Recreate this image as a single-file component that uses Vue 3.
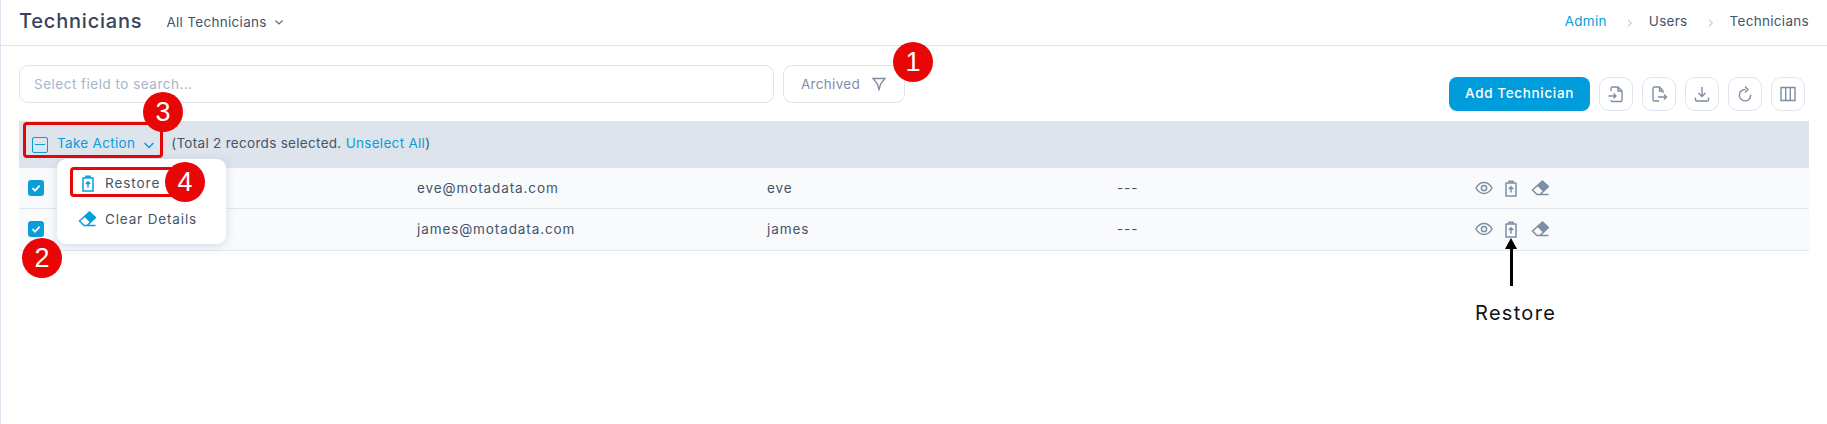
<script setup>
const rows = [
  { email: 'eve@motadata.com', user: 'eve' },
  { email: 'james@motadata.com', user: 'james' },
]
const crumbs = ['Users', 'Technicians']
</script>

<template>
  <div class="page">
    <header class="topbar">
      <h1 class="title">Technicians</h1>
      <div class="view">
        All Technicians
        <svg width="10" height="10" viewBox="0 0 10 10" class="caret"><path d="M1.5 3.5 5 7l3.5-3.5" /></svg>
      </div>
      <nav class="crumbs">
        <span class="link">Admin</span>
        <template v-for="c in crumbs" :key="c">
          <svg width="6" height="8" viewBox="0 0 6 8" class="sep"><path d="M1 .8 4.4 4 1 7.2" /></svg>
          <span>{{ c }}</span>
        </template>
      </nav>
    </header>

    <section class="toolbar">
      <div class="search">Select field to search...</div>
      <div class="archived">
        Archived
        <svg width="14" height="14" viewBox="0 0 14 14" class="funnel"><path d="M1 1.500h12L8.600 7 7 12.600 5.400 7z" /></svg>
      </div>
      <div class="actions">
        <button class="primary">Add Technician</button>
        <button class="tool">
          <svg width="18" height="18" viewBox="0 0 18 18"><path d="M4 6V3.500A1.500 1.500 0 0 1 5.500 2H11l4 4v9a1.500 1.500 0 0 1-1.500 1.500h-8A1.500 1.500 0 0 1 4 15M11 2v4h4M1.500 11H9M6.500 8.500 9 11l-2.500 2.500" /></svg>
        </button>
        <button class="tool">
          <svg width="18" height="18" viewBox="0 0 18 18"><path d="M13 8V6L9.500 2H4.500A1.500 1.500 0 0 0 3 3.500v11A1.500 1.500 0 0 0 4.500 16H9M9.500 2v4H13M8 12h8.500M14 9.500l2.500 2.500-2.500 2.500" /></svg>
        </button>
        <button class="tool">
          <svg width="18" height="18" viewBox="0 0 18 18"><path d="M9 2v9.500M5.500 8 9 11.500 12.500 8M2.500 12.500V15a1 1 0 0 0 1 1h11a1 1 0 0 0 1-1v-2.500" /></svg>
        </button>
        <button class="tool">
          <svg width="18" height="18" viewBox="0 0 18 18"><path d="M9.500 4.500A5.700 5.700 0 1 0 14.700 10M9 1.500l3 3-3 3" /></svg>
        </button>
        <button class="tool">
          <svg width="18" height="18" viewBox="0 0 18 18"><path d="M2 2.500h14v13H2zM6.700 2.500v13M11.300 2.500v13" /></svg>
        </button>
      </div>
    </section>

    <section class="table">
      <div class="band">
        <span class="minus"></span>
        <span class="link take">Take Action</span>
        <svg width="12" height="12" viewBox="0 0 12 12" class="take-caret"><path d="M1.500 4 6 8.500 10.500 4" /></svg>
        <span class="summary">(Total 2 records selected. <span class="link">Unselect All</span>)</span>
      </div>
      <div v-for="r in rows" :key="r.user" class="row">
        <span class="check">
          <svg width="12" height="12" viewBox="0 0 12 12"><path d="M2.500 6.200 5 8.700l4.700-5" /></svg>
        </span>
        <span class="cell-name"></span>
        <span>{{ r.email }}</span>
        <span>{{ r.user }}</span>
        <span class="dash">---</span>
        <span class="row-icons">
          <svg width="18" height="14" viewBox="0 0 18 14"><path d="M1 7c2-3.600 4.800-5.400 8-5.400S15 3.400 17 7c-2 3.600-4.800 5.400-8 5.400S3 10.600 1 7z" /><circle cx="9" cy="7" r="2.600" /></svg>
          <svg width="14" height="17" viewBox="0 0 14 17"><path d="M1.500 3h11M5 3V1.200h4V3M2 3v13h10V3M7 12.500V7M4.800 9 7 6.800 9.200 9" /></svg>
          <svg width="18" height="16" viewBox="0 0 18 16" class="eraser"><path d="M11.500 1 17.500 6.500 9 14.500H6L1.500 10zM9 14.500h8.500" /><path class="fill" d="M11.500 1 17.500 6.500 12 11.500 6 5.500z" /></svg>
        </span>
      </div>
    </section>

    <div class="menu">
      <div class="menu-item">
        <svg width="14" height="17" viewBox="0 0 14 17"><path d="M1.500 3h11M5 3V1.200h4V3M2 3v13h10V3M7 12.500V7M4.800 9 7 6.800 9.200 9" /></svg>
        <span>Restore</span>
      </div>
      <div class="menu-item second">
        <svg width="18" height="16" viewBox="0 0 18 16" class="eraser"><path d="M11.500 1 17.500 6.500 9 14.500H6L1.500 10zM9 14.500h8.500" /><path class="fill" d="M11.500 1 17.500 6.500 12 11.500 6 5.500z" /></svg>
        <span>Clear Details</span>
      </div>
    </div>

    <div class="mark-box box-take"></div>
    <div class="mark-box box-restore"></div>
    <div class="badge b1">1</div>
    <div class="badge b2">2</div>
    <div class="badge b3">3</div>
    <div class="badge b4">4</div>

    <div class="arrow"></div>
    <div class="arrow-label">Restore</div>
  </div>
</template>

<style>
body { margin: 0; background: #fff; }
</style>

<style scoped>
.page {
  position: relative;
  width: 1827px;
  height: 424px;
  box-sizing: border-box;
  border-left: 1px solid #dfe4f0;
  overflow: hidden;
  font-family: Inter, "Noto Sans", sans-serif;
  font-size: 13.5px;
  letter-spacing: 0.3px;
  color: #44546a;
  background: #fff;
}
.link { color: #099dd9; }
.topbar {
  display: flex;
  align-items: center;
  height: 46px;
  padding: 0 18px 3px 18px;
  box-sizing: border-box;
  border-bottom: 1px solid #dfe4ee;
}
.title {
  margin: 0;
  font-size: 20px;
  font-weight: 500;
  letter-spacing: 0.8px;
  color: #364658;
}
.view {
  margin-left: 24px;
  display: flex;
  align-items: center;
  gap: 7px;
  margin-top: 2px;
}
.caret, .sep, .take-caret { fill: none; stroke: #5c6b80; stroke-width: 1.2; }
.take-caret { stroke: #099dd9; stroke-width: 1.5; margin: 3px 0 0 8px; }
.sep { stroke: #a9b4c4; stroke-width: 1; margin: 3px 16px 0 20px; }
.crumbs { margin-left: auto; display: flex; align-items: center; }
.toolbar {
  display: flex;
  align-items: flex-start;
  padding: 19px 18px 0 18px;
  height: 75px;
  box-sizing: border-box;
}
.search, .archived {
  height: 38px;
  box-sizing: border-box;
  border: 1px solid #dfe4ee;
  border-radius: 9px;
  display: flex;
  align-items: center;
}
.search { width: 755px; padding-left: 14px; color: #a6b5c9; letter-spacing: 0.5px; }
.archived {
  width: 122px;
  margin-left: 9px;
  padding-left: 17px;
  gap: 12px;
  color: #7e8ea5;
}
.funnel { fill: none; stroke: #7e8ea5; stroke-width: 1.4; }
.actions {
  margin-left: auto;
  display: flex;
  gap: 9px;
  margin-top: 12px;
  margin-right: 4px;
}
.primary {
  width: 141px;
  height: 34px;
  padding: 0 0 2px;
  border: 0;
  border-radius: 8px;
  background: #009ddd;
  color: #fff;
  font: inherit;
  font-weight: 500;
  letter-spacing: 0.65px;
}
.tool {
  width: 34px;
  height: 34px;
  padding: 0;
  display: grid;
  place-items: center;
  background: #fff;
  border: 1px solid #dfe4ee;
  border-radius: 10px;
}
.tool svg { fill: none; stroke: #7e8ea5; stroke-width: 1.4; }
.table { margin: 0 18px; }
.band {
  height: 47px;
  background: #dee4ec;
  display: flex;
  align-items: center;
  padding: 0 0 3px 13px;
  box-sizing: border-box;
}
.minus {
  position: relative;
  width: 16px;
  height: 16px;
  box-sizing: border-box;
  border: 1.5px solid #099dd9;
  border-radius: 2px;
  margin-top: 3px;
}
.minus::after {
  content: '';
  position: absolute;
  left: 2px;
  right: 2px;
  top: 6px;
  height: 1.5px;
  background: #099dd9;
}
.take { margin-left: 9px; }
.summary { margin-left: 16px; }
.row {
  display: grid;
  grid-template-columns: 26px 363px 350px 350px 358px 1fr;
  align-items: center;
  height: 41px;
  padding-left: 9px;
  box-sizing: border-box;
  background: #f8fafc;
  border-bottom: 1px solid #dfe6ef;
  letter-spacing: 0.9px;
}
.row:last-child { height: 42px; padding-bottom: 1px; }
.check {
  width: 16px;
  height: 16px;
  border-radius: 3px;
  background: #099dd9;
  display: grid;
  place-items: center;
}
.check svg { fill: none; stroke: #fff; stroke-width: 1.8; }
.row-icons { display: flex; align-items: center; gap: 11px; }
.row-icons svg { fill: none; stroke: #7e8ea5; stroke-width: 1.5; }
.eraser .fill { fill: currentColor; stroke: none; }
.row-icons .eraser { color: #7e8ea5; margin-left: 2px; }
.menu {
  position: absolute;
  left: 56px;
  top: 159px;
  width: 169px;
  height: 85px;
  box-sizing: border-box;
  background: #fff;
  border-radius: 9px;
  box-shadow: 0 2px 10px rgba(60, 75, 100, 0.18);
  padding: 15px 0 0 24px;
}
.menu-item { display: flex; align-items: center; gap: 10px; height: 18px; letter-spacing: 0.95px; }
.menu-item svg { fill: none; stroke: #099dd9; stroke-width: 1.5; }
.menu-item .eraser { color: #099dd9; margin-left: -3px; }
.menu-item.second { margin-top: 18px; gap: 9px; letter-spacing: 0.85px; }
.mark-box {
  position: absolute;
  border: 3px solid #e40707;
  border-radius: 4px;
  box-sizing: border-box;
}
.box-take { left: 22px; top: 122px; width: 140px; height: 36px; }
.box-restore { left: 69px; top: 167px; width: 104px; height: 30px; }
.badge {
  position: absolute;
  width: 40px;
  height: 40px;
  border-radius: 50%;
  background: #e90606;
  color: #fff;
  display: grid;
  place-items: center;
  font-family: "Liberation Sans", sans-serif;
  font-size: 27px;
  letter-spacing: 0;
}
.b1 { left: 892px; top: 42px; }
.b2 { left: 21px; top: 238px; }
.b3 { left: 142px; top: 92px; }
.b4 { left: 164px; top: 162px; }
.arrow {
  position: absolute;
  left: 1509px;
  top: 248px;
  width: 3px;
  height: 38px;
  background: #000;
}
.arrow::before {
  content: '';
  position: absolute;
  left: -5px;
  top: -10px;
  border-left: 6.500px solid transparent;
  border-right: 6.500px solid transparent;
  border-bottom: 11px solid #000;
}
.arrow-label {
  position: absolute;
  left: 1474px;
  top: 301px;
  font-size: 20px;
  color: #111;
  letter-spacing: 1.3px;
}
</style>
